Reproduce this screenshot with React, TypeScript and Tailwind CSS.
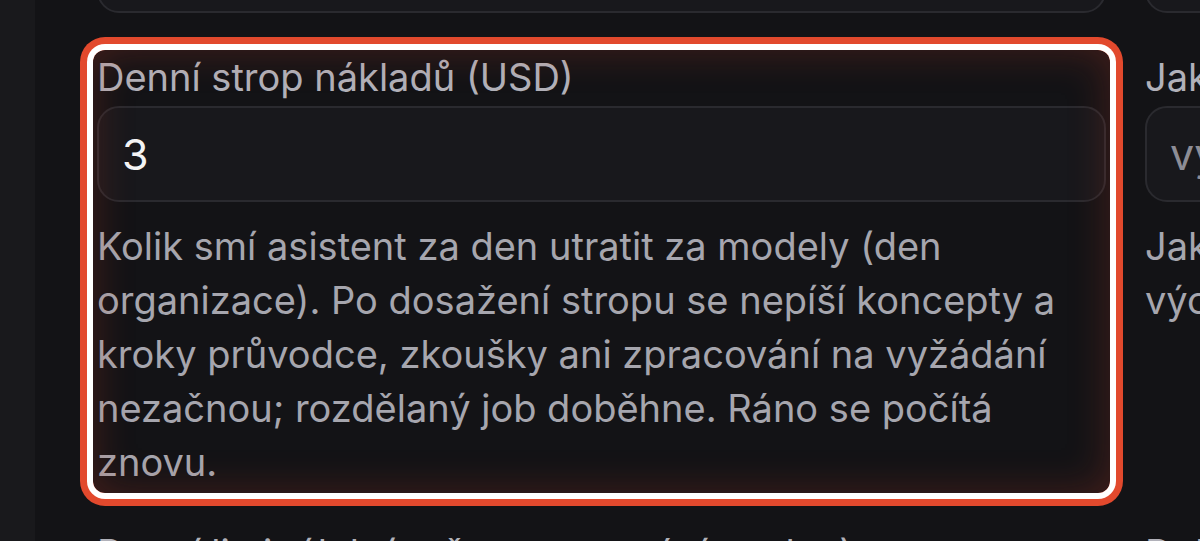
import React from "react";

const font = { fontFamily: "Inter, 'Noto Sans', sans-serif" };

function Field({
  label,
  value,
  placeholder,
  desc,
  highlight,
}: {
  label?: string;
  value?: string;
  placeholder?: string;
  desc?: React.ReactNode;
  highlight?: boolean;
}) {
  return (
    <div className="relative flex flex-col">
      {label && (
        <div className="mb-[6px] text-[38px] leading-[46px] text-[#b1b1b9] whitespace-nowrap">{label}</div>
      )}
      <div className="h-[96px] rounded-[22px] border-2 border-[#2a2a2f] bg-[#18181c] flex items-center px-[23px] text-[43px] text-[#f4f4f5] whitespace-nowrap overflow-hidden">
        {value ? value : <span className="text-[#8d8d96]">{placeholder}</span>}
      </div>
      {desc && (
        <div className="mt-[17px] text-[38px] leading-[54px] text-[#a6a6ae]">{desc}</div>
      )}
      {highlight && (
        <div className="pointer-events-none absolute -inset-[4px] rounded-[12px] shadow-[0_0_0_6px_#ffffff,0_0_0_13px_#e2492d,inset_0_0_40px_rgba(200,60,40,0.28)]" />
      )}
    </div>
  );
}

export default function App() {
  return (
    <div className="w-[1200px] h-[541px] overflow-hidden bg-[#131316] flex" style={font}>
      <div className="w-[35px] shrink-0 bg-[#19191c]" />
      <div className="flex-1 pl-[62px] overflow-hidden">
        <div className="-mt-[83px] grid grid-cols-[1009px_1009px] gap-x-[39px] gap-y-[41px]">
          <Field value=" " />
          <Field value=" " />
          <Field
            highlight
            label="Denní strop nákladů (USD)"
            value="3"
            desc="Kolik smí asistent za den utratit za modely (den organizace). Po dosažení stropu se nepíší koncepty a kroky průvodce, zkoušky ani zpracování na vyžádání nezačnou; rozdělaný job doběhne. Ráno se počítá znovu."
          />
          <Field
            label="Jakým tónem asistent píše"
            placeholder="vykání"
            desc={
              <>
                Jak má asistent oslovovat zákazníky
                <br />
                výchozí je vykání.
              </>
            }
          />
          <Field label="Denní limit úloh (počet zpracování za den)" value=" " />
          <Field label="Doba uchování dat" value=" " />
        </div>
      </div>
    </div>
  );
}
